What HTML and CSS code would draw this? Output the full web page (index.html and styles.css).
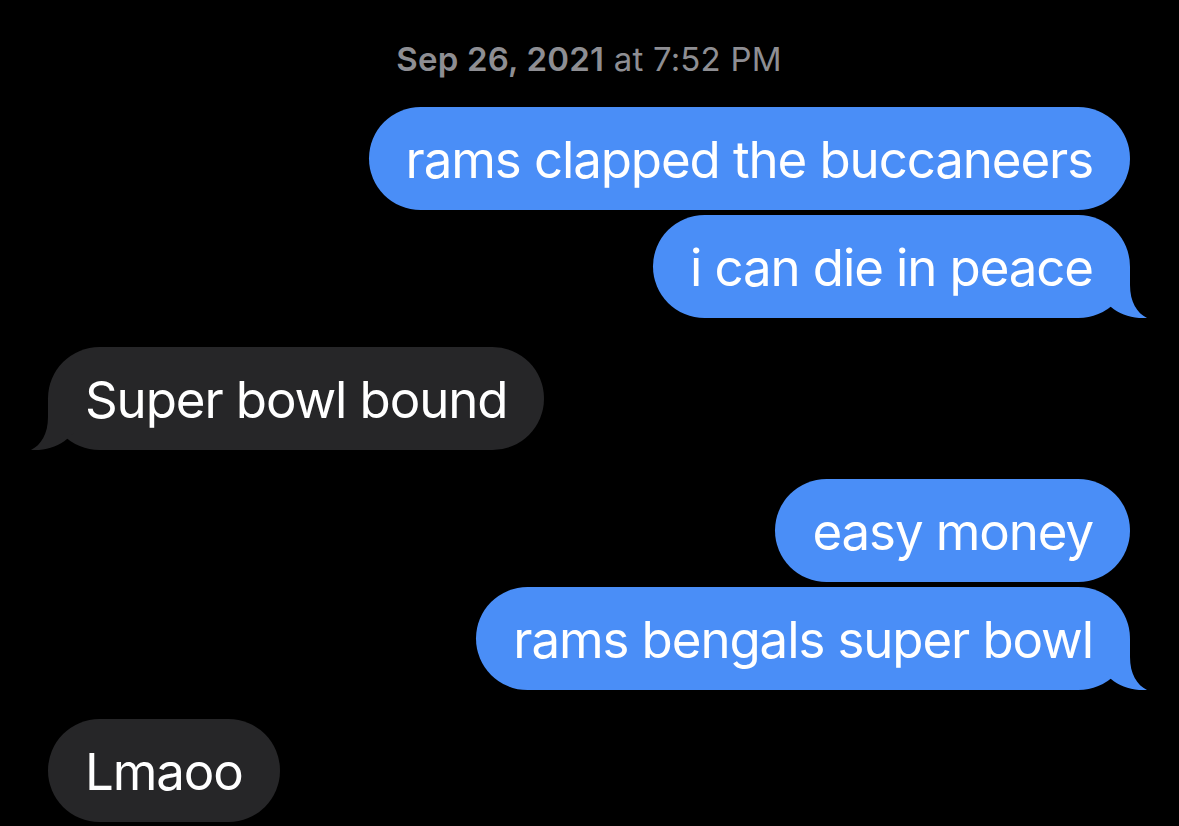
FILE: index.html
```html
<!DOCTYPE html>
<html lang="en">
<head>
<meta charset="utf-8">
<title>Messages</title>
<link rel="stylesheet" href="styles.css">
</head>
<body>
<main class="thread">
  <div class="stamp"><span class="stamp-date">Sep 26, 2021</span> at 7:52 PM</div>

  <div class="group sent">
    <div class="bubble">rams clapped the buccaneers</div>
    <div class="bubble tailed">i can die in peace<svg class="tail" viewBox="0 0 48 51" width="48" height="51"><path d="M0 0 L31 0 L31 18 C31 35 38 46 48 51 C35 52 21 48 12 40 L0 30 Z"/></svg></div>
  </div>

  <div class="group received">
    <div class="bubble tailed">Super bowl bound<svg class="tail" viewBox="0 0 48 51" width="48" height="51"><path d="M0 0 L31 0 L31 18 C31 35 38 46 48 51 C35 52 21 48 12 40 L0 30 Z"/></svg></div>
  </div>

  <div class="group sent">
    <div class="bubble">easy money</div>
    <div class="bubble tailed">rams bengals super bowl<svg class="tail" viewBox="0 0 48 51" width="48" height="51"><path d="M0 0 L31 0 L31 18 C31 35 38 46 48 51 C35 52 21 48 12 40 L0 30 Z"/></svg></div>
  </div>

  <div class="group received">
    <div class="bubble">Lmaoo</div>
  </div>
</main>
</body>
</html>
```

FILE: styles.css
```css
html, body {
  margin: 0;
  padding: 0;
  background: #000;
  height: 100%;
  overflow: hidden;
}

.thread {
  display: flex;
  flex-direction: column;
  padding: 39px 49px 0 48px;
  font-family: Inter, "Noto Sans", "Liberation Sans", sans-serif;
}

.stamp {
  align-self: center;
  font-size: 33px;
  line-height: 40px;
  color: #8e8e93;
  letter-spacing: 0.2px;
  margin-bottom: 28px;
}

.stamp-date {
  font-weight: 600;
}

.group {
  display: flex;
  flex-direction: column;
  gap: 5px;
  margin-bottom: 29px;
}

.group.sent {
  align-items: flex-end;
}

.group.received {
  align-items: flex-start;
}

.bubble {
  position: relative;
  font-size: 51px;
  line-height: 61px;
  padding: 22px 37px 20px 37px;
  border-radius: 52px;
  color: #fff;
  letter-spacing: -1.1px;
  white-space: nowrap;
}

.sent .bubble {
  background: #4a8ef7;
}

.received .bubble {
  background: #262628;
}

.tail {
  position: absolute;
  bottom: 0;
  display: block;
}

.sent .tail {
  right: -17px;
  fill: #4a8ef7;
}

.received .tail {
  left: -17px;
  transform: scaleX(-1);
  fill: #262628;
}
```
